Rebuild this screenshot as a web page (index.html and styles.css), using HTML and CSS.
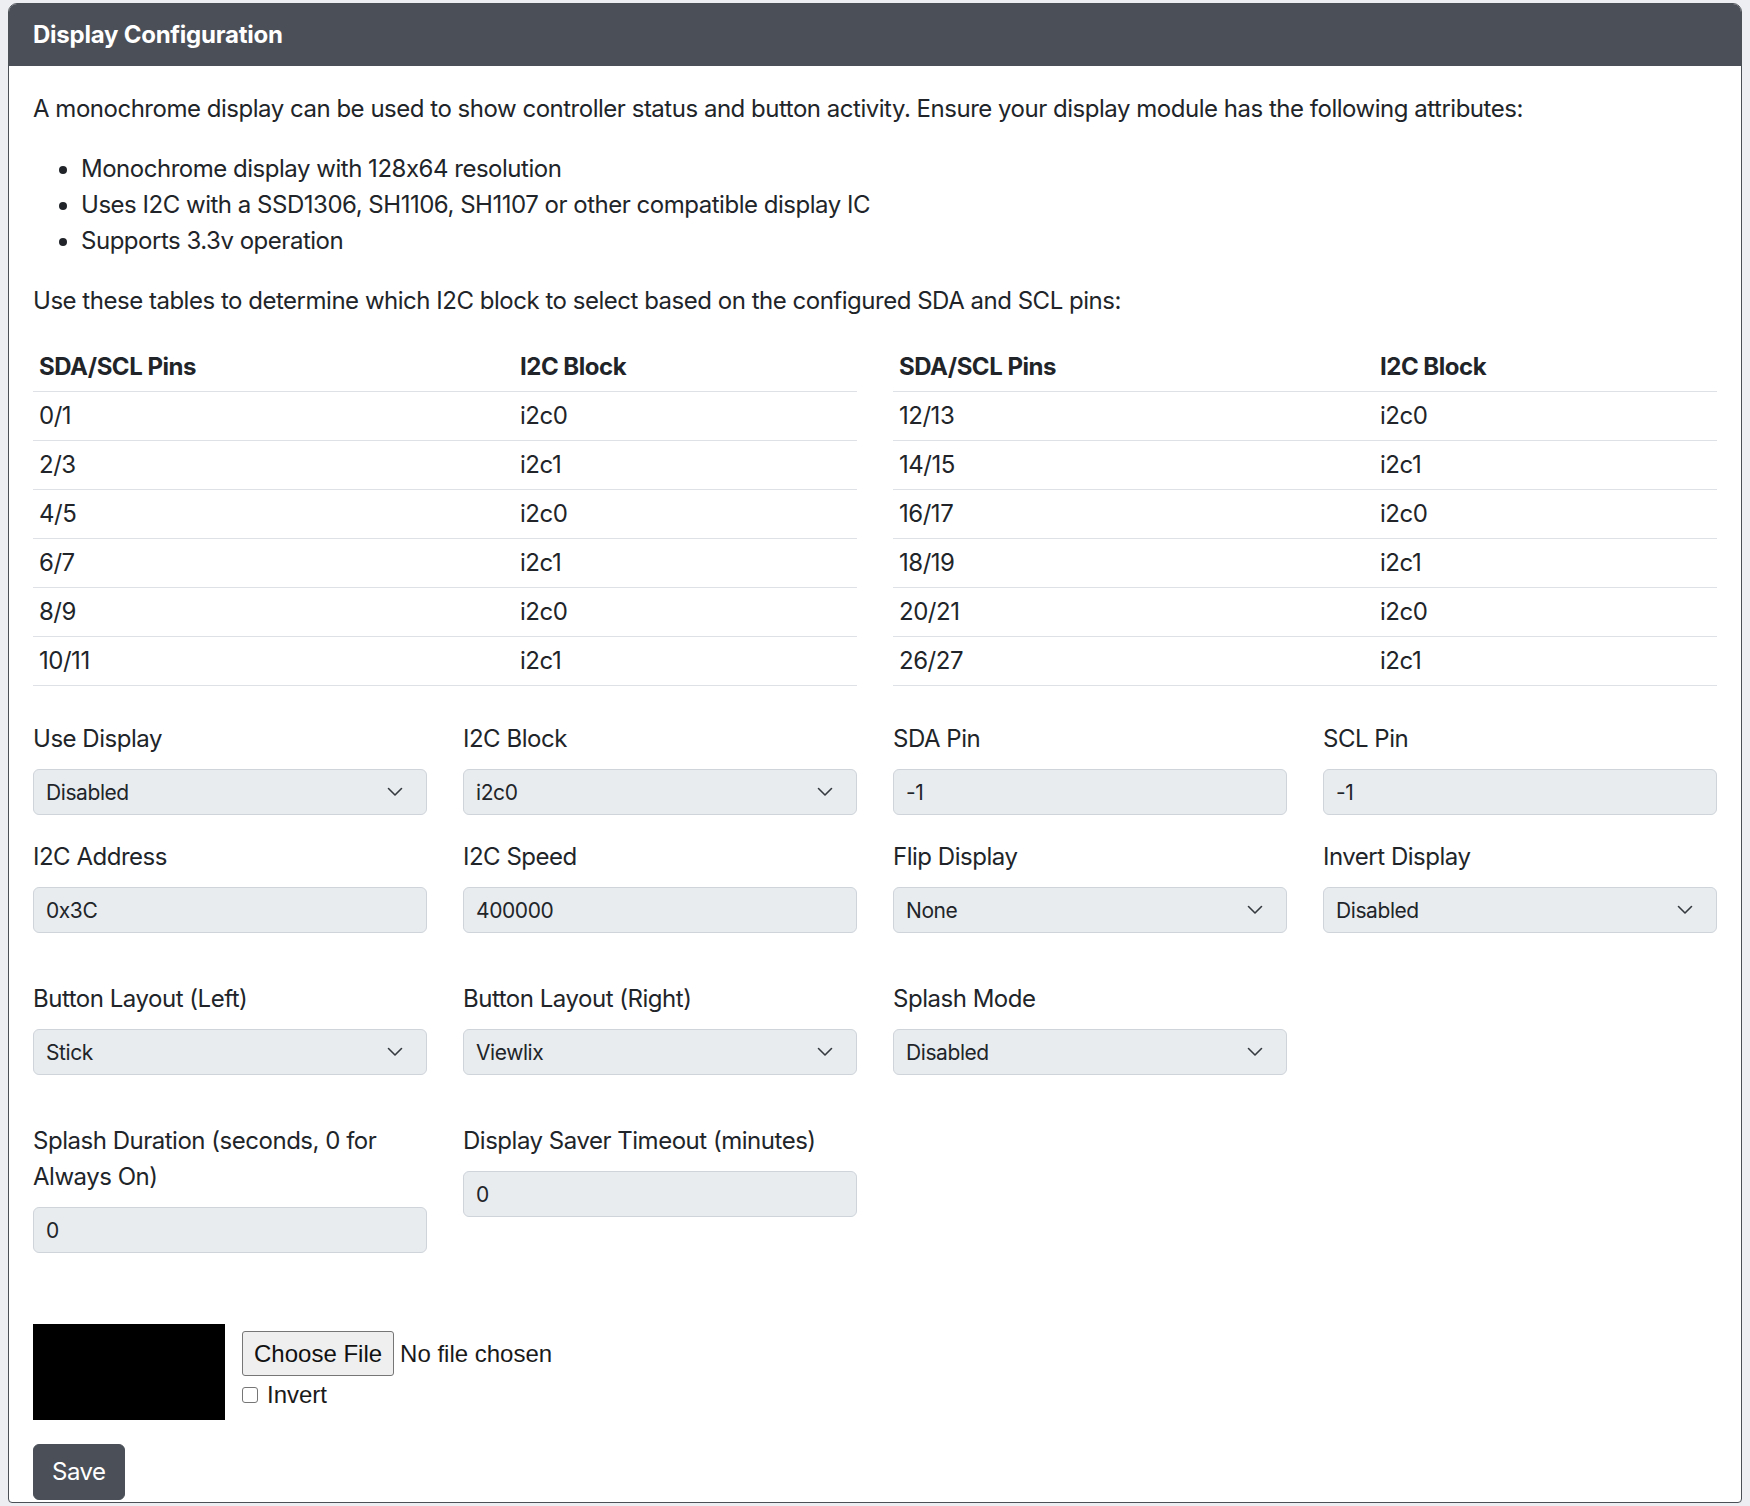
FILE: index.html
```html
<!DOCTYPE html>
<html lang="en">
<head>
<meta charset="utf-8">
<title>Display Configuration</title>
<link rel="stylesheet" href="styles.css">
</head>
<body>
<div class="card">
  <div class="card-header">Display Configuration</div>
  <div class="card-body">
    <p>A monochrome display can be used to show controller status and button activity. Ensure your display module has the following attributes:</p>
    <ul class="attrs">
      <li>Monochrome display with 128x64 resolution</li>
      <li>Uses I2C with a SSD1306, SH1106, SH1107 or other compatible display IC</li>
      <li>Supports 3.3v operation</li>
    </ul>
    <p>Use these tables to determine which I2C block to select based on the configured SDA and SCL pins:</p>
    <div class="tables">
      <table class="pin-table">
        <thead><tr><th class="pins">SDA/SCL Pins</th><th>I2C Block</th></tr></thead>
        <tbody>
          <tr><td>0/1</td><td>i2c0</td></tr>
          <tr><td>2/3</td><td>i2c1</td></tr>
          <tr><td>4/5</td><td>i2c0</td></tr>
          <tr><td>6/7</td><td>i2c1</td></tr>
          <tr><td>8/9</td><td>i2c0</td></tr>
          <tr><td>10/11</td><td>i2c1</td></tr>
        </tbody>
      </table>
      <table class="pin-table">
        <thead><tr><th class="pins">SDA/SCL Pins</th><th>I2C Block</th></tr></thead>
        <tbody>
          <tr><td>12/13</td><td>i2c0</td></tr>
          <tr><td>14/15</td><td>i2c1</td></tr>
          <tr><td>16/17</td><td>i2c0</td></tr>
          <tr><td>18/19</td><td>i2c1</td></tr>
          <tr><td>20/21</td><td>i2c0</td></tr>
          <tr><td>26/27</td><td>i2c1</td></tr>
        </tbody>
      </table>
    </div>

    <div class="form-row first">
      <div class="field">
        <label class="form-label">Use Display</label>
        <select class="form-select"><option>Disabled</option></select>
      </div>
      <div class="field">
        <label class="form-label">I2C Block</label>
        <select class="form-select"><option>i2c0</option></select>
      </div>
      <div class="field">
        <label class="form-label">SDA Pin</label>
        <input class="form-control" type="text" value="-1">
      </div>
      <div class="field">
        <label class="form-label">SCL Pin</label>
        <input class="form-control" type="text" value="-1">
      </div>
      <div class="field">
        <label class="form-label">I2C Address</label>
        <input class="form-control" type="text" value="0x3C">
      </div>
      <div class="field">
        <label class="form-label">I2C Speed</label>
        <input class="form-control" type="text" value="400000">
      </div>
      <div class="field">
        <label class="form-label">Flip Display</label>
        <select class="form-select"><option>None</option></select>
      </div>
      <div class="field">
        <label class="form-label">Invert Display</label>
        <select class="form-select"><option>Disabled</option></select>
      </div>
    </div>

    <div class="form-row">
      <div class="field">
        <label class="form-label">Button Layout (Left)</label>
        <select class="form-select"><option>Stick</option></select>
      </div>
      <div class="field">
        <label class="form-label">Button Layout (Right)</label>
        <select class="form-select"><option>Viewlix</option></select>
      </div>
      <div class="field">
        <label class="form-label">Splash Mode</label>
        <select class="form-select"><option>Disabled</option></select>
      </div>
    </div>

    <div class="form-row">
      <div class="field">
        <label class="form-label">Splash Duration (seconds, 0 for Always On)</label>
        <input class="form-control" type="text" value="0">
      </div>
      <div class="field">
        <label class="form-label">Display Saver Timeout (minutes)</label>
        <input class="form-control" type="text" value="0">
      </div>
    </div>

    <div class="splash-editor">
      <div class="splash-canvas"></div>
      <div class="splash-controls">
        <div class="file-line">
          <button class="file-btn" type="button">Choose File</button>
          <span class="file-status">No file chosen</span>
        </div>
        <label class="invert-check"><input class="check-box" type="checkbox"><span>Invert</span></label>
      </div>
    </div>

    <button class="btn-save" type="button">Save</button>
  </div>
</div>
</body>
</html>
```

FILE: styles.css
```css
* {
  box-sizing: border-box;
}

html, body {
  margin: 0;
  padding: 0;
}

body {
  background: #eceef1;
  padding: 3px 8px 0 8px;
  font-family: Inter, "Noto Sans", sans-serif;
  font-size: 24px;
  line-height: 36px;
  letter-spacing: -0.02em;
  font-feature-settings: "calt" 0;
  color: #212529;
}

.card {
  background: #fff;
  border: 1px solid #4b5057;
  border-radius: 9px 9px 4px 4px;
  overflow: hidden;
}

.card-header {
  background: #4b5058;
  color: #fff;
  font-weight: 700;
  letter-spacing: -0.01em;
  padding: 13px 24px;
  line-height: 36px;
}

.card-body {
  padding: 25px 24px 2px 24px;
}

p {
  margin: 0 0 24px 0;
}

.attrs {
  margin: 0 0 24px 0;
  padding-left: 48px;
}

.tables {
  display: grid;
  grid-template-columns: 1fr 1fr;
  column-gap: 36px;
  margin-bottom: 35px;
}

.pin-table {
  width: 100%;
  border-collapse: collapse;
  table-layout: fixed;
}

.pin-table th,
.pin-table td {
  text-align: left;
  padding: 6px;
  border-bottom: 1px solid #dee2e6;
  line-height: 36px;
}

.pin-table th {
  font-weight: 700;
}

.pin-table th.pins {
  width: 481px;
}

.form-row {
  display: grid;
  grid-template-columns: repeat(4, 1fr);
  column-gap: 36px;
  row-gap: 24px;
  margin-bottom: 48px;
}

.form-row:last-of-type {
  margin-bottom: 0;
}

.field {
  display: flex;
  flex-direction: column;
}

.form-label {
  display: block;
  margin-bottom: 12px;
}

.form-select,
.form-control {
  width: 100%;
  height: 46px;
  margin: 0;
  padding: 0 12px;
  font-family: Inter, "Noto Sans", sans-serif;
  font-size: 21px;
  letter-spacing: -0.02em;
  font-feature-settings: "calt" 0;
  color: #212529;
  background-color: #e9ecef;
  border: 1px solid #ced4da;
  border-radius: 6px;
  outline: none;
  -webkit-appearance: none;
  appearance: none;
}

.form-select {
  padding-right: 48px;
  background-image: url("data:image/svg+xml,%3csvg xmlns='http://www.w3.org/2000/svg' viewBox='0 0 16 10'%3e%3cpath fill='none' stroke='%23343a40' stroke-linecap='round' stroke-linejoin='round' stroke-width='1.6' d='M1.5 1.5l6.5 6.5 6.5-6.5'/%3e%3c/svg%3e");
  background-repeat: no-repeat;
  background-position: right 23px center;
  background-size: 16px 10px;
}

.splash-editor {
  display: flex;
  align-items: flex-start;
  gap: 17px;
  margin-top: 71px;
}

.splash-canvas {
  width: 192px;
  height: 96px;
  background: #000;
  flex: none;
}

.splash-controls {
  padding-top: 7px;
  font-family: "Liberation Sans", Arial, sans-serif;
  font-size: 24px;
  line-height: 28px;
  letter-spacing: 0;
  color: #1a1a1a;
}

.file-line {
  display: flex;
  align-items: center;
  gap: 6px;
}

.file-btn {
  font-family: "Liberation Sans", Arial, sans-serif;
  font-size: 24px;
  line-height: 28px;
  color: #111;
  background: #efefef;
  border: 1px solid #767676;
  border-radius: 3px;
  padding: 8px 11px 7px 11px;
  margin: 0;
}

.invert-check {
  display: flex;
  align-items: center;
  gap: 9px;
  margin-top: 5px;
}

.check-box {
  -webkit-appearance: none;
  appearance: none;
  width: 16px;
  height: 16px;
  margin: 0;
  border: 1px solid #767676;
  border-radius: 3px;
  background: #fff;
}

.btn-save {
  display: block;
  margin-top: 24px;
  padding: 9px 18px;
  font-family: Inter, "Noto Sans", sans-serif;
  font-size: 24px;
  line-height: 36px;
  letter-spacing: -0.02em;
  color: #fff;
  background: #4b5058;
  border: 1px solid #4b5058;
  border-radius: 6px;
}
```
